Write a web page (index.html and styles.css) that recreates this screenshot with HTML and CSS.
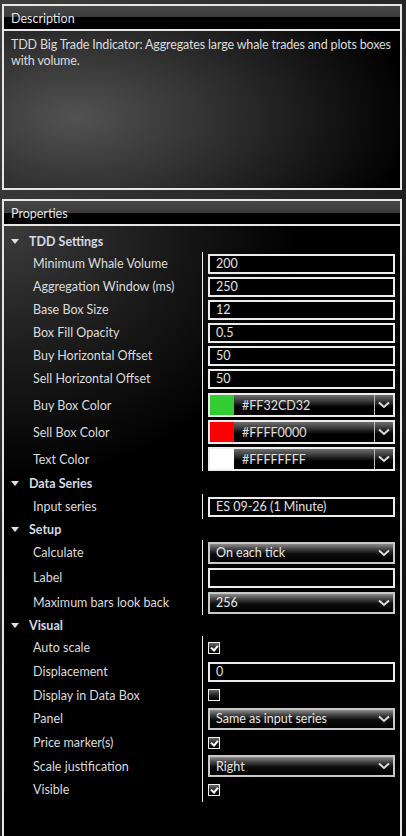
FILE: index.html
```html
<!DOCTYPE html>
<html lang="en">
<head>
    <meta charset="UTF-8">
    <meta name="viewport" content="width=device-width, initial-scale=1.0">
    <title>Indicator Properties</title>
    <link rel="stylesheet" href="styles.css">
</head>
<body>

<!-- Description panel -->
<div class="panel desc-panel">
    <div class="panel-header">Description</div>
    <div class="desc-body">TDD Big Trade Indicator: Aggregates large whale trades and plots boxes with volume.</div>
</div>

<!-- Properties panel -->
<div class="panel props-panel">
    <div class="panel-header">Properties</div>
    <div class="props-body">

        <div class="group">
            <div class="group-title"><span class="caret"></span>TDD Settings</div>
            <div class="rows first">
                <div class="label">Minimum Whale Volume</div>
                <div class="value"><div class="field">200</div></div>
                <div class="label">Aggregation Window (ms)</div>
                <div class="value"><div class="field">250</div></div>
                <div class="label">Base Box Size</div>
                <div class="value"><div class="field">12</div></div>
                <div class="label">Box Fill Opacity</div>
                <div class="value"><div class="field">0.5</div></div>
                <div class="label">Buy Horizontal Offset</div>
                <div class="value"><div class="field">50</div></div>
                <div class="label">Sell Horizontal Offset</div>
                <div class="value"><div class="field">50</div></div>
                <div class="label tall">Buy Box Color</div>
                <div class="value tall">
                    <div class="color-pick">
                        <span class="swatch" style="background:#32cd32"></span>
                        <span class="color-name">#FF32CD32</span>
                        <span class="color-btn"><svg width="12" height="8" viewBox="0 0 12 8"><path d="M1 1.5 L6 6 L11 1.5" fill="none" stroke="#ddd" stroke-width="2"/></svg></span>
                    </div>
                </div>
                <div class="label tall">Sell Box Color</div>
                <div class="value tall">
                    <div class="color-pick">
                        <span class="swatch" style="background:#ff0000"></span>
                        <span class="color-name">#FFFF0000</span>
                        <span class="color-btn"><svg width="12" height="8" viewBox="0 0 12 8"><path d="M1 1.5 L6 6 L11 1.5" fill="none" stroke="#ddd" stroke-width="2"/></svg></span>
                    </div>
                </div>
                <div class="label tall">Text Color</div>
                <div class="value tall">
                    <div class="color-pick">
                        <span class="swatch" style="background:#ffffff"></span>
                        <span class="color-name">#FFFFFFFF</span>
                        <span class="color-btn"><svg width="12" height="8" viewBox="0 0 12 8"><path d="M1 1.5 L6 6 L11 1.5" fill="none" stroke="#ddd" stroke-width="2"/></svg></span>
                    </div>
                </div>
            </div>
        </div>

        <div class="group">
            <div class="group-title"><span class="caret"></span>Data Series</div>
            <div class="rows mid">
                <div class="label">Input series</div>
                <div class="value"><div class="field">ES 09-26 (1 Minute)</div></div>
            </div>
        </div>

        <div class="group">
            <div class="group-title"><span class="caret"></span>Setup</div>
            <div class="rows mid">
                <div class="label">Calculate</div>
                <div class="value"><div class="select">On each tick<svg width="12" height="8" viewBox="0 0 12 8"><path d="M1 1.5 L6 6 L11 1.5" fill="none" stroke="#ddd" stroke-width="2"/></svg></div></div>
                <div class="label">Label</div>
                <div class="value"><div class="field"></div></div>
                <div class="label">Maximum bars look back</div>
                <div class="value"><div class="select">256<svg width="12" height="8" viewBox="0 0 12 8"><path d="M1 1.5 L6 6 L11 1.5" fill="none" stroke="#ddd" stroke-width="2"/></svg></div></div>
            </div>
        </div>

        <div class="group">
            <div class="group-title"><span class="caret"></span>Visual</div>
            <div class="rows visual">
                <div class="label">Auto scale</div>
                <div class="value"><span class="check on"></span></div>
                <div class="label">Displacement</div>
                <div class="value"><div class="field">0</div></div>
                <div class="label">Display in Data Box</div>
                <div class="value"><span class="check"></span></div>
                <div class="label">Panel</div>
                <div class="value"><div class="select">Same as input series<svg width="12" height="8" viewBox="0 0 12 8"><path d="M1 1.5 L6 6 L11 1.5" fill="none" stroke="#ddd" stroke-width="2"/></svg></div></div>
                <div class="label">Price marker(s)</div>
                <div class="value"><span class="check on"></span></div>
                <div class="label">Scale justification</div>
                <div class="value"><div class="select">Right<svg width="12" height="8" viewBox="0 0 12 8"><path d="M1 1.5 L6 6 L11 1.5" fill="none" stroke="#ddd" stroke-width="2"/></svg></div></div>
                <div class="label">Visible</div>
                <div class="value"><span class="check on"></span></div>
            </div>
        </div>

    </div>
</div>

</body>
</html>
```

FILE: styles.css
```css
body {
    margin: 0;
    padding: 4px 4px 0 2px;
    height: 836px;
    box-sizing: border-box;
    overflow: hidden;
    font-family: 'Lato', 'Liberation Sans', sans-serif;
    font-size: 12.5px;
    color: #dcdcdc;
    background: linear-gradient(120deg, #3e3e3e 0%, #262626 45%, #0a0a0a 100%);
}

.panel {
    border: 2px solid #e6e6e6;
    border-bottom: none;
    width: 400px;
    box-sizing: border-box;
}

.panel-header {
    height: 25px;
    padding: 5px 0 0 7px;
    box-sizing: border-box;
    font-size: 12.5px;
    color: #e6e6e6;
    background: linear-gradient(#464646 0, #3c3c3c 50%, #000 50%, #000 100%);
    border-bottom: 2px solid #e6e6e6;
}

/* Description box */
.desc-panel {
    height: 186px;
    border-bottom: 2px solid #e6e6e6;
}

.desc-body {
    height: 157px;
    padding: 6px 4px 0 7px;
    box-sizing: border-box;
    line-height: 16px;
    letter-spacing: -0.15px;
    background: radial-gradient(ellipse 90% 120% at 18% 55%, #525252 0%, #2c2c2c 45%, #000 95%);
}

/* Properties box */
.props-panel {
    margin-top: 9px;
    height: 640px;
}

.props-body {
    height: 100%;
    padding-top: 5px;
    box-sizing: border-box;
    background: radial-gradient(ellipse 75% 40% at 0% 0%, #3c3c3c 0%, #1c1c1c 50%, #000 100%);
}

.group-title {
    height: 21px;
    display: flex;
    align-items: center;
    font-weight: bold;
    color: #d4dae8;
    padding-left: 7px;
}

.caret {
    width: 0;
    height: 0;
    border-left: 4px solid transparent;
    border-right: 4px solid transparent;
    border-top: 5px solid #e0e0e0;
    margin-right: 10px;
}

.rows {
    display: grid;
    grid-template-columns: 198px 1fr;
}

.rows.first {
    margin-bottom: 2px;
}

.label,
.value {
    height: 23px;
    box-sizing: border-box;
}

.rows.mid .label,
.rows.mid .value {
    height: 25px;
}

.rows.visual .label,
.rows.visual .value {
    height: 23.7px;
}

.label {
    display: flex;
    align-items: center;
    padding-left: 29px;
}

.value {
    border-left: 1px solid #f0f0f0;
    display: flex;
    align-items: center;
    padding: 0 5px;
}

.label.tall,
.value.tall {
    height: 27px;
    padding-top: 3px;
}

.value.tall {
    align-items: stretch;
}

.field {
    width: 187px;
    height: 20px;
    box-sizing: border-box;
    border: 2px solid #ececec;
    background: #000;
    padding-left: 6px;
    display: flex;
    align-items: center;
    color: #e0e0e0;
}

.select {
    width: 187px;
    height: 22px;
    box-sizing: border-box;
    border: 2px solid #c8c8c8;
    background: linear-gradient(#8c8c8c 0%, #4a4a4a 25%, #0c0c0c 55%, #000 100%);
    padding: 0 3px 0 6px;
    display: flex;
    align-items: center;
    justify-content: space-between;
    color: #e8e8e8;
}

.color-pick {
    width: 187px;
    height: 24px;
    box-sizing: border-box;
    border: 2px solid #ececec;
    display: flex;
    background: #000;
}

.swatch {
    width: 24px;
}

.color-name {
    flex: 1;
    padding-left: 8px;
    display: flex;
    align-items: center;
    color: #e0e0e0;
    background: linear-gradient(#6e6e6e 0%, #3a3a3a 30%, #000 60%);
}

.color-btn {
    width: 18px;
    border-left: 1px solid #bbb;
    display: flex;
    align-items: center;
    justify-content: center;
    background: linear-gradient(#6e6e6e 0%, #3a3a3a 30%, #000 60%);
}

.check {
    width: 12px;
    height: 12px;
    box-sizing: border-box;
    border: 1px solid #f0f0f0;
    background: linear-gradient(#6a6a6a 0%, #1a1a1a 60%, #000 100%);
    position: relative;
}

.check.on::after {
    content: '';
    position: absolute;
    left: 3px;
    top: 1px;
    width: 3px;
    height: 5px;
    border-right: 2px solid #fff;
    border-bottom: 2px solid #fff;
    transform: rotate(40deg);
}
```
